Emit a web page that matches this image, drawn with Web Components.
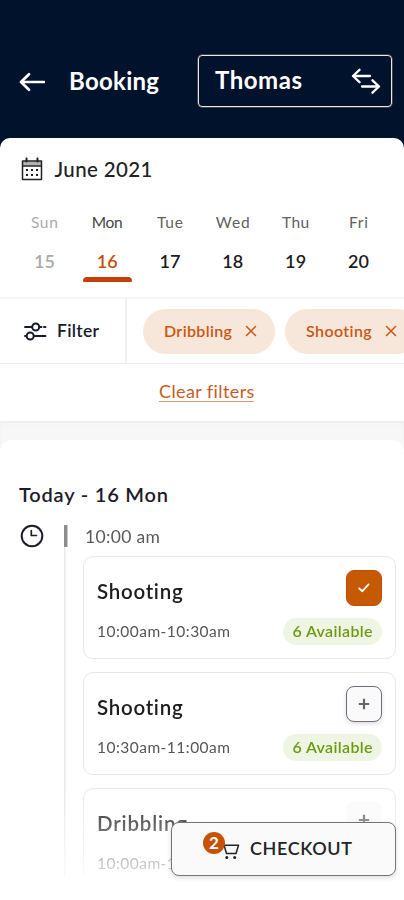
<!DOCTYPE html>
<html lang="en">
<head>
<meta charset="utf-8">
<title>Booking</title>
<style>
html,body{margin:0;padding:0;background:#fff}
body{width:404px;height:900px;overflow:hidden;font-family:Lato,"Noto Sans",sans-serif}
</style>
</head>
<body>
<booking-app></booking-app>
<script>
const define=(name,html,after)=>{
  const t=document.createElement('template');t.innerHTML=html;
  customElements.define(name,class extends HTMLElement{
    constructor(){super();this.attachShadow({mode:'open'}).append(t.content.cloneNode(true));}
    connectedCallback(){if(after)after(this,this.shadowRoot);}
  });
};

/* A line of text tracked out to a given width. */
define('fit-text',`<style>
:host{display:block;flex:none;white-space:pre;overflow:visible;line-height:24px;height:24px}
span{display:inline-block}
</style><span><slot></slot></span>`,(el,root)=>{
  const s=root.querySelector('span'),w=+el.getAttribute('w'),n=el.textContent.length;
  el.style.fontSize=el.getAttribute('size')+'px';
  el.style.fontWeight=el.getAttribute('weight')||400;
  el.style.width=w+'px';
  s.style.letterSpacing=(w-s.getBoundingClientRect().width)/(n-1)+'px';
});

const icons={
  back:['26','22','<path d="M25 11H2M10 3.2 2 11l8 7.8" stroke-width="2.7"/>'],
  swap:['30','26','<path d="M19 8H2M8.500 1.800 2 8l6.500 6.200M11 18.500h17M21.500 12.300l6.500 6.200-6.500 6.200" stroke-width="2.300"/>'],
  calendar:['22','24','<path d="M1.500 4h19v18.500h-19zM1.500 9h19" stroke-width="1.500"/><path d="M2 4.500h18v4H2z" fill="currentColor" fill-opacity=".35" stroke="none"/><path d="M5.500 1.500v3M16.500 1.500v3" stroke-width="2"/><path d="M5 13h2m3 0h2m3 0h2M5 18h2m3 0h2m3 0h2" stroke-width="2" stroke-linecap="butt"/>'],
  filter:['24','20','<path d="M2 6h7M16.500 6h2M21 6h1.500M2 15h1M11 15h11.500" stroke-width="1.900"/><circle cx="12.700" cy="6" r="3.500" stroke-width="2"/><circle cx="7.200" cy="15" r="3.500" stroke-width="2"/>'],
  close:['12','12','<path d="M1.500 1.500l9 9M10.500 1.500l-9 9" stroke-width="1.500"/>'],
  clock:['24','24','<circle cx="12" cy="12" r="10.300" stroke-width="2"/><path d="M11.300 6.500V11.500H16.500" stroke-width="1.700"/>'],
  check:['12','10','<path d="M1.200 5.400l3.200 2.800L10.500 1.500" stroke-width="1.800"/>'],
  plus:['12','12','<path d="M6 .8v10.400M.8 6h10.400" stroke-width="2.200" stroke-linecap="butt"/>'],
  cart:['20','18','<path d="M1 1.500h2.500l3 10h9.500l2.500-8.300H4.500" stroke-width="1.500"/><circle cx="6.800" cy="15.500" r="1.500" fill="currentColor" stroke="none"/><circle cx="14.700" cy="15.500" r="1.500" fill="currentColor" stroke="none"/>']
};
define('ui-icon','<style>:host{display:block;flex:none}svg{display:block;fill:none;stroke:currentColor;stroke-linecap:round;stroke-linejoin:round}</style><div></div>',(el,root)=>{
  const [w,h,p]=icons[el.getAttribute('name')];
  root.querySelector('div').innerHTML=`<svg width="${w}" height="${h}" viewBox="0 0 ${w} ${h}">${p}</svg>`;
});

define('booking-header',`<style>
:host{display:flex;height:150px;box-sizing:border-box;background:#01122d;color:#fff;padding:55px 12px 0 19px}
.title{display:flex;align-items:center;height:54px;flex:1}
.title fit-text{margin:-2px 0 0 24px}
.who fit-text{margin-top:-2px}
.who{display:flex;align-items:center;justify-content:space-between;box-sizing:border-box;width:194px;height:52px;border:1px solid #efe6dc;border-radius:4px;padding:0 10px 0 16px;box-shadow:0 0 0 .5px #d9d0c888}
</style>
<div class="title"><ui-icon name="back"></ui-icon><fit-text w="90" size="24" weight="700">Booking</fit-text></div>
<div class="who"><fit-text w="87" size="24" weight="700">Thomas</fit-text><ui-icon name="swap"></ui-icon></div>`);

define('day-cell',`<style>
:host{display:flex;flex-direction:column;align-items:center;width:62.8px;height:72px;color:#1c1c1e}
.n{color:#606060;margin-bottom:15px}
:host([past]) .n,:host([past]){color:#aaa}
:host([current]){color:#c44f0c}
:host([current]) .n{color:#444}
i{display:none;width:49px;height:5px;margin-top:4px;background:#c33f05;border-radius:4px 4px 1px 1px}
:host([current]) i{display:block}
</style><div class="n"><slot name="name"></slot></div><slot name="date"></slot><i></i>`);

define('week-panel',`<style>
:host{display:block;height:159px;box-sizing:border-box;background:#fff;border-radius:10px 10px 0 0;margin-top:-12px;padding-top:19px;position:relative}
.month{display:flex;align-items:center;padding-left:21px;gap:11.500px;color:#222;height:24px}
.days{display:flex;margin:29px 0 0 13px}
</style>
<div class="month"><ui-icon name="calendar"></ui-icon><fit-text w="98" size="20.5" weight="500">June 2021</fit-text></div>
<div class="days"></div>`,(el,root)=>{
  root.querySelector('.days').innerHTML=[['Sun',15,27,'past'],['Mon',16,31,'current'],['Tue',17,26,''],['Wed',18,34,''],['Thu',19,27,''],['Fri',20,19,'']]
  .map(([d,n,w,s])=>`<day-cell ${s}><fit-text slot="name" w="${w}" size="15.5">${d}</fit-text><fit-text slot="date" w="21" size="18" weight="600">${n}</fit-text></day-cell>`).join('');
});

define('filter-chip',`<style>
:host{display:flex;flex:none;align-items:center;gap:13px;box-sizing:border-box;width:132px;height:45px;border-radius:23px;background:#f7e7da;color:#c85714;padding:0 18px 0 21px}
</style><slot></slot><ui-icon name="close"></ui-icon>`);

define('filter-panel',`<style>
:host{display:block;height:124px;box-sizing:border-box;border-top:2px solid #f5f5f5;background:#fff;color:#171b2c}
.bar{display:flex;height:65px;box-sizing:border-box;border-bottom:1.500px solid #ebebeb;overflow:hidden}
.filter{display:flex;flex:none;align-items:center;box-sizing:border-box;width:127px;border-right:2px solid #f0f0f0;padding-left:23px;gap:10px}
.chips{display:flex;flex:none;align-items:center;gap:10px;padding-left:16px}
filter-chip + filter-chip{width:134px}
.clear{display:flex;justify-content:center;padding:15px 0 0 9px;color:#c85c22}
.link{height:22px;border-bottom:1px solid #d99575}
</style>
<div class="bar"><div class="filter"><ui-icon name="filter"></ui-icon><fit-text w="42" size="17.5" weight="600">Filter</fit-text></div>
<div class="chips"><filter-chip><fit-text w="68" size="16" weight="600">Dribbling</fit-text></filter-chip><filter-chip><fit-text w="66" size="16" weight="600">Shooting</fit-text></filter-chip></div></div>
<div class="clear"><div class="link"><fit-text w="95" size="18">Clear filters</fit-text></div></div>`);

define('select-box',`<style>
:host{display:flex;align-items:center;justify-content:center;box-sizing:border-box;width:36px;height:36px;border-radius:8px;border:1.500px solid #6d7177;background:#fafafb;color:#666;box-shadow:0 2px 4px #0002}
:host([on]){background:#c65a03;border-color:#c24e10;color:#fff;box-shadow:none}
:host([faint]){border-color:transparent;box-shadow:none;background:#fafafa}
</style><slot></slot>`);

define('slot-card',`<style>
:host{display:block;box-sizing:border-box;width:313px;height:103px;border:1.500px solid #e8e8e8;border-radius:10px;background:#fff;padding:13px 13px 0;color:#1d1d1f}
.top,.row{display:flex;justify-content:space-between}
.top{height:36px}.top ::slotted(fit-text){margin-top:9px}
.row{align-items:center;height:28px;margin-top:11px;color:#555}
</style>
<div class="top"><slot name="title"></slot><slot name="box"></slot></div>
<div class="row"><slot name="time"></slot><slot name="badge"></slot></div>`);

define('stock-badge',`<style>
:host{display:flex;align-items:center;justify-content:center;width:99px;height:27px;border-radius:14px;background:#eff5e3;color:#6d9913}
</style><slot></slot>`);

define('day-schedule',`<style>
:host{display:block;height:479px;background:#f7f7f7;padding-top:19px;box-shadow:inset 0 3px 4px -2px #0001}
.sheet{background:#fff;border-radius:12px 12px 0 0;height:460px;padding-top:42px;box-sizing:border-box}
.heading{padding-left:19px;color:#1c1c2a}
.body{display:flex;height:353px;margin-top:18px;overflow:hidden;-webkit-mask:linear-gradient(#000 0,#000 265px,rgba(0,0,0,.25) 350px)}
.clock{width:44px;padding-left:20px;color:#1c1c2a}
.rail{width:19px;height:353px;background:linear-gradient(#8d8d8d,#8d8d8d) 0 1px/3.500px 22px no-repeat,linear-gradient(#e9e9e9,#e9e9e9) 0 22px/1.500px 331px no-repeat}
.hour{height:24px;padding:1px 0 0 2px;box-sizing:border-box;color:#5a5a5a}
.cards{display:flex;flex-direction:column;gap:13px;margin-top:8px}
</style>
<div class="sheet"><div class="heading"><fit-text w="149" size="20" weight="600">Today - 16 Mon</fit-text></div>
<div class="body"><div class="clock"><ui-icon name="clock"></ui-icon></div><div class="rail"></div>
<div><div class="hour"><fit-text w="75" size="17.5">10:00 am</fit-text></div>
<div class="cards">
<slot-card><fit-text slot="title" w="86" size="20.5" weight="600">Shooting</fit-text><select-box slot="box" on><ui-icon name="check"></ui-icon></select-box><fit-text slot="time" w="133" size="15.5">10:00am-10:30am</fit-text><stock-badge slot="badge"><fit-text w="80" size="16" weight="600">6 Available</fit-text></stock-badge></slot-card>
<slot-card><fit-text slot="title" w="86" size="20.5" weight="600">Shooting</fit-text><select-box slot="box"><ui-icon name="plus"></ui-icon></select-box><fit-text slot="time" w="133" size="15.5">10:30am-11:00am</fit-text><stock-badge slot="badge"><fit-text w="80" size="16" weight="600">6 Available</fit-text></stock-badge></slot-card>
<slot-card><fit-text slot="title" w="90" size="20.5" weight="600">Dribbling</fit-text><select-box slot="box" faint><ui-icon name="plus"></ui-icon></select-box><fit-text slot="time" w="133" size="15.5">10:00am-10:30am</fit-text></slot-card>
</div></div></div></div>`);

define('checkout-button',`<style>
:host{position:absolute;left:171px;top:822px;width:225px;height:54px;box-sizing:border-box;display:flex;align-items:center;border:1.500px solid #707579;border-radius:8px;background:#fafafa;color:#232326;box-shadow:0 2px 5px #0002;padding-left:48px}
fit-text{margin:-2px 0 0 10px}
ui-icon{margin-top:3px}
.count{position:absolute;left:31px;top:9px;width:22px;height:22px;border-radius:50%;background:#c75207;color:#fff;display:flex;align-items:center;justify-content:center;font:700 17px/22px Lato,sans-serif}
</style><ui-icon name="cart"></ui-icon><fit-text w="102" size="18" weight="600">CHECKOUT</fit-text><span class="count">2</span>`);

define('booking-app',`<style>:host{display:block;width:404px;height:900px;position:relative;overflow:hidden;background:#fff}</style>
<booking-header></booking-header><week-panel></week-panel><filter-panel></filter-panel><day-schedule></day-schedule><checkout-button></checkout-button>`);
</script>
</body>
</html>
